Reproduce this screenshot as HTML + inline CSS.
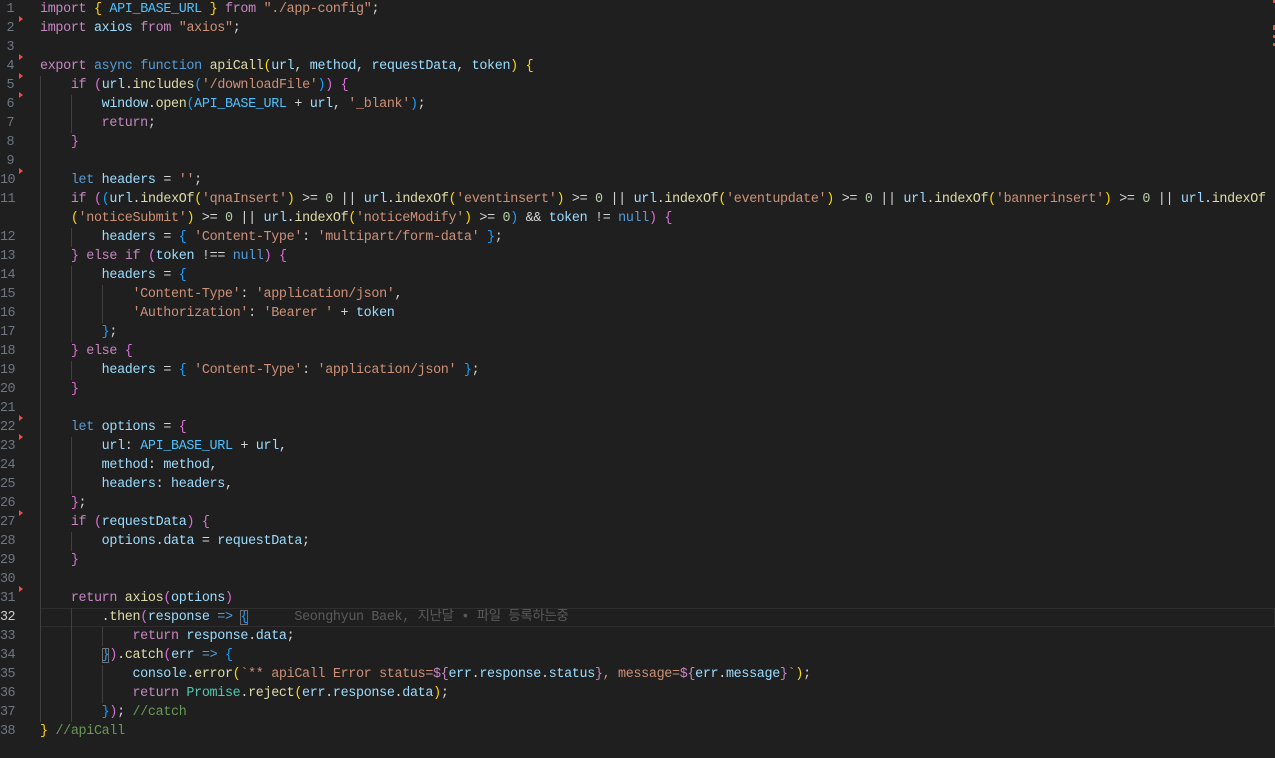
<!DOCTYPE html>
<html><head><meta charset="utf-8"><style>
html,body{margin:0;padding:0;background:#1f1f1f;width:1275px;height:758px;overflow:hidden}
#ed{position:relative;width:1275px;height:758px;font-family:"Liberation Mono","Noto Sans CJK KR",monospace;font-size:13.4px;letter-spacing:-0.33px}
.ln{position:absolute;left:0;width:14px;text-align:right;color:#6e7681;height:19px;line-height:19px;letter-spacing:-0.5px}
.row{position:absolute;left:40px;height:19px;line-height:19px;white-space:pre;color:#d4d4d4}
.g{position:absolute;width:1px;background:#404040}
.tri{position:absolute;left:19px;width:0;height:0;border-top:3px solid transparent;border-bottom:3px solid transparent;border-left:4px solid #f14c4c}
.k{color:#c586c0}.s{color:#569cd6}.v{color:#9cdcfe}.c4{color:#4fc1ff}.f{color:#dcdcaa}.t{color:#ce9178}.n{color:#b5cea8}.c{color:#6a9955}.y{color:#ffd700}.p{color:#da70d6}.b{color:#179fff}.cl{color:#4ec9b0}
.box{outline:1px solid #707070;outline-offset:-1px}
</style></head><body><div id="ed">
<div style="position:absolute;left:40px;top:608px;width:1235px;height:19px;box-sizing:border-box;border:1px solid #2e2e2e"></div>
<div class="g" style="left:40px;top:76px;height:646px"></div>
<div class="g" style="left:71px;top:95px;height:38px"></div>
<div class="g" style="left:71px;top:228px;height:19px"></div>
<div class="g" style="left:71px;top:266px;height:76px"></div>
<div class="g" style="left:71px;top:361px;height:19px"></div>
<div class="g" style="left:71px;top:437px;height:57px"></div>
<div class="g" style="left:71px;top:532px;height:19px"></div>
<div class="g" style="left:71px;top:608px;height:114px"></div>
<div class="g" style="left:102px;top:285px;height:38px"></div>
<div class="g" style="left:102px;top:627px;height:19px"></div>
<div class="g" style="left:102px;top:665px;height:38px"></div>
<div class="tri" style="top:16px"></div><div class="tri" style="top:54px"></div><div class="tri" style="top:73px"></div><div class="tri" style="top:92px"></div><div class="tri" style="top:168px"></div><div class="tri" style="top:415px"></div><div class="tri" style="top:434px"></div><div class="tri" style="top:510px"></div><div class="tri" style="top:586px"></div>
<div style="position:absolute;left:1273px;top:0;width:2px;height:3px;background:#f14c4c"></div>
<div style="position:absolute;left:1273px;top:25px;width:2px;height:5px;background:#f14c4c"></div>
<div style="position:absolute;left:1273px;top:35px;width:2px;height:3px;background:#f14c4c"></div>
<div style="position:absolute;left:1273px;top:43px;width:2px;height:3px;background:#f14c4c"></div>

<div class="ln" style="top:0">1</div><div class="row" style="top:0"><span class="k">import</span> <span class="y">{</span> <span class="c4">API_BASE_URL</span> <span class="y">}</span> <span class="k">from</span> <span class="t">"./app-config"</span>;</div>
<div class="ln" style="top:19px">2</div><div class="row" style="top:19px"><span class="k">import</span> <span class="v">axios</span> <span class="k">from</span> <span class="t">"axios"</span>;</div>
<div class="ln" style="top:38px">3</div>
<div class="ln" style="top:57px">4</div><div class="row" style="top:57px"><span class="k">export</span> <span class="s">async</span> <span class="s">function</span> <span class="f">apiCall</span><span class="y">(</span><span class="v">url</span>, <span class="v">method</span>, <span class="v">requestData</span>, <span class="v">token</span><span class="y">)</span> <span class="y">{</span></div>
<div class="ln" style="top:76px">5</div><div class="row" style="top:76px">    <span class="k">if</span> <span class="p">(</span><span class="v">url</span>.<span class="f">includes</span><span class="b">(</span><span class="t">'/downloadFile'</span><span class="b">)</span><span class="p">)</span> <span class="p">{</span></div>
<div class="ln" style="top:95px">6</div><div class="row" style="top:95px">        <span class="v">window</span>.<span class="f">open</span><span class="b">(</span><span class="c4">API_BASE_URL</span> + <span class="v">url</span>, <span class="t">'_blank'</span><span class="b">)</span>;</div>
<div class="ln" style="top:114px">7</div><div class="row" style="top:114px">        <span class="k">return</span>;</div>
<div class="ln" style="top:133px">8</div><div class="row" style="top:133px">    <span class="p">}</span></div>
<div class="ln" style="top:152px">9</div>
<div class="ln" style="top:171px">10</div><div class="row" style="top:171px">    <span class="s">let</span> <span class="v">headers</span> = <span class="t">''</span>;</div>
<div class="ln" style="top:190px">11</div><div class="row" style="top:190px">    <span class="k">if</span> <span class="p">(</span><span class="b">(</span><span class="v">url</span>.<span class="f">indexOf</span><span class="y">(</span><span class="t">'qnaInsert'</span><span class="y">)</span> &gt;= <span class="n">0</span> || <span class="v">url</span>.<span class="f">indexOf</span><span class="y">(</span><span class="t">'eventinsert'</span><span class="y">)</span> &gt;= <span class="n">0</span> || <span class="v">url</span>.<span class="f">indexOf</span><span class="y">(</span><span class="t">'eventupdate'</span><span class="y">)</span> &gt;= <span class="n">0</span> || <span class="v">url</span>.<span class="f">indexOf</span><span class="y">(</span><span class="t">'bannerinsert'</span><span class="y">)</span> &gt;= <span class="n">0</span> || <span class="v">url</span>.<span class="f">indexOf</span></div>
<div class="row" style="top:209px">    <span class="y">(</span><span class="t">'noticeSubmit'</span><span class="y">)</span> &gt;= <span class="n">0</span> || <span class="v">url</span>.<span class="f">indexOf</span><span class="y">(</span><span class="t">'noticeModify'</span><span class="y">)</span> &gt;= <span class="n">0</span><span class="b">)</span> &amp;&amp; <span class="v">token</span> != <span class="s">null</span><span class="p">)</span> <span class="p">{</span></div>
<div class="ln" style="top:228px">12</div><div class="row" style="top:228px">        <span class="v">headers</span> = <span class="b">{</span> <span class="t">'Content-Type'</span>: <span class="t">'multipart/form-data'</span> <span class="b">}</span>;</div>
<div class="ln" style="top:247px">13</div><div class="row" style="top:247px">    <span class="p">}</span> <span class="k">else</span> <span class="k">if</span> <span class="p">(</span><span class="v">token</span> !== <span class="s">null</span><span class="p">)</span> <span class="p">{</span></div>
<div class="ln" style="top:266px">14</div><div class="row" style="top:266px">        <span class="v">headers</span> = <span class="b">{</span></div>
<div class="ln" style="top:285px">15</div><div class="row" style="top:285px">            <span class="t">'Content-Type'</span>: <span class="t">'application/json'</span>,</div>
<div class="ln" style="top:304px">16</div><div class="row" style="top:304px">            <span class="t">'Authorization'</span>: <span class="t">'Bearer '</span> + <span class="v">token</span></div>
<div class="ln" style="top:323px">17</div><div class="row" style="top:323px">        <span class="b">}</span>;</div>
<div class="ln" style="top:342px">18</div><div class="row" style="top:342px">    <span class="p">}</span> <span class="k">else</span> <span class="p">{</span></div>
<div class="ln" style="top:361px">19</div><div class="row" style="top:361px">        <span class="v">headers</span> = <span class="b">{</span> <span class="t">'Content-Type'</span>: <span class="t">'application/json'</span> <span class="b">}</span>;</div>
<div class="ln" style="top:380px">20</div><div class="row" style="top:380px">    <span class="p">}</span></div>
<div class="ln" style="top:399px">21</div>
<div class="ln" style="top:418px">22</div><div class="row" style="top:418px">    <span class="s">let</span> <span class="v">options</span> = <span class="p">{</span></div>
<div class="ln" style="top:437px">23</div><div class="row" style="top:437px">        <span class="v">url</span>: <span class="c4">API_BASE_URL</span> + <span class="v">url</span>,</div>
<div class="ln" style="top:456px">24</div><div class="row" style="top:456px">        <span class="v">method</span>: <span class="v">method</span>,</div>
<div class="ln" style="top:475px">25</div><div class="row" style="top:475px">        <span class="v">headers</span>: <span class="v">headers</span>,</div>
<div class="ln" style="top:494px">26</div><div class="row" style="top:494px">    <span class="p">}</span>;</div>
<div class="ln" style="top:513px">27</div><div class="row" style="top:513px">    <span class="k">if</span> <span class="p">(</span><span class="v">requestData</span><span class="p">)</span> <span class="p">{</span></div>
<div class="ln" style="top:532px">28</div><div class="row" style="top:532px">        <span class="v">options</span>.<span class="v">data</span> = <span class="v">requestData</span>;</div>
<div class="ln" style="top:551px">29</div><div class="row" style="top:551px">    <span class="p">}</span></div>
<div class="ln" style="top:570px">30</div>
<div class="ln" style="top:589px">31</div><div class="row" style="top:589px">    <span class="k">return</span> <span class="f">axios</span><span class="p">(</span><span class="v">options</span><span class="p">)</span></div>
<div class="ln" style="top:608px;color:#cccccc">32</div><div class="row" style="top:608px">        .<span class="f">then</span><span class="p">(</span><span class="v">response</span> <span class="s">=&gt;</span> <span class="b box">{</span>      <span style="color:#5a5a5a">Seonghyun Baek, 지난달 • 파일 등록하는중</span></div>
<div class="ln" style="top:627px">33</div><div class="row" style="top:627px">            <span class="k">return</span> <span class="v">response</span>.<span class="v">data</span>;</div>
<div class="ln" style="top:646px">34</div><div class="row" style="top:646px">        <span class="b box">}</span><span class="p">)</span>.<span class="f">catch</span><span class="p">(</span><span class="v">err</span> <span class="s">=&gt;</span> <span class="b">{</span></div>
<div class="ln" style="top:665px">35</div><div class="row" style="top:665px">            <span class="v">console</span>.<span class="f">error</span><span class="y">(</span><span class="t">`** apiCall Error status=</span><span class="k">${</span><span class="v">err</span>.<span class="v">response</span>.<span class="v">status</span><span class="k">}</span><span class="t">, message=</span><span class="k">${</span><span class="v">err</span>.<span class="v">message</span><span class="k">}</span><span class="t">`</span><span class="y">)</span>;</div>
<div class="ln" style="top:684px">36</div><div class="row" style="top:684px">            <span class="k">return</span> <span class="cl">Promise</span>.<span class="f">reject</span><span class="y">(</span><span class="v">err</span>.<span class="v">response</span>.<span class="v">data</span><span class="y">)</span>;</div>
<div class="ln" style="top:703px">37</div><div class="row" style="top:703px">        <span class="b">}</span><span class="p">)</span>; <span class="c">//catch</span></div>
<div class="ln" style="top:722px">38</div><div class="row" style="top:722px"><span class="y">}</span> <span class="c">//apiCall</span></div>
</div></body></html>
